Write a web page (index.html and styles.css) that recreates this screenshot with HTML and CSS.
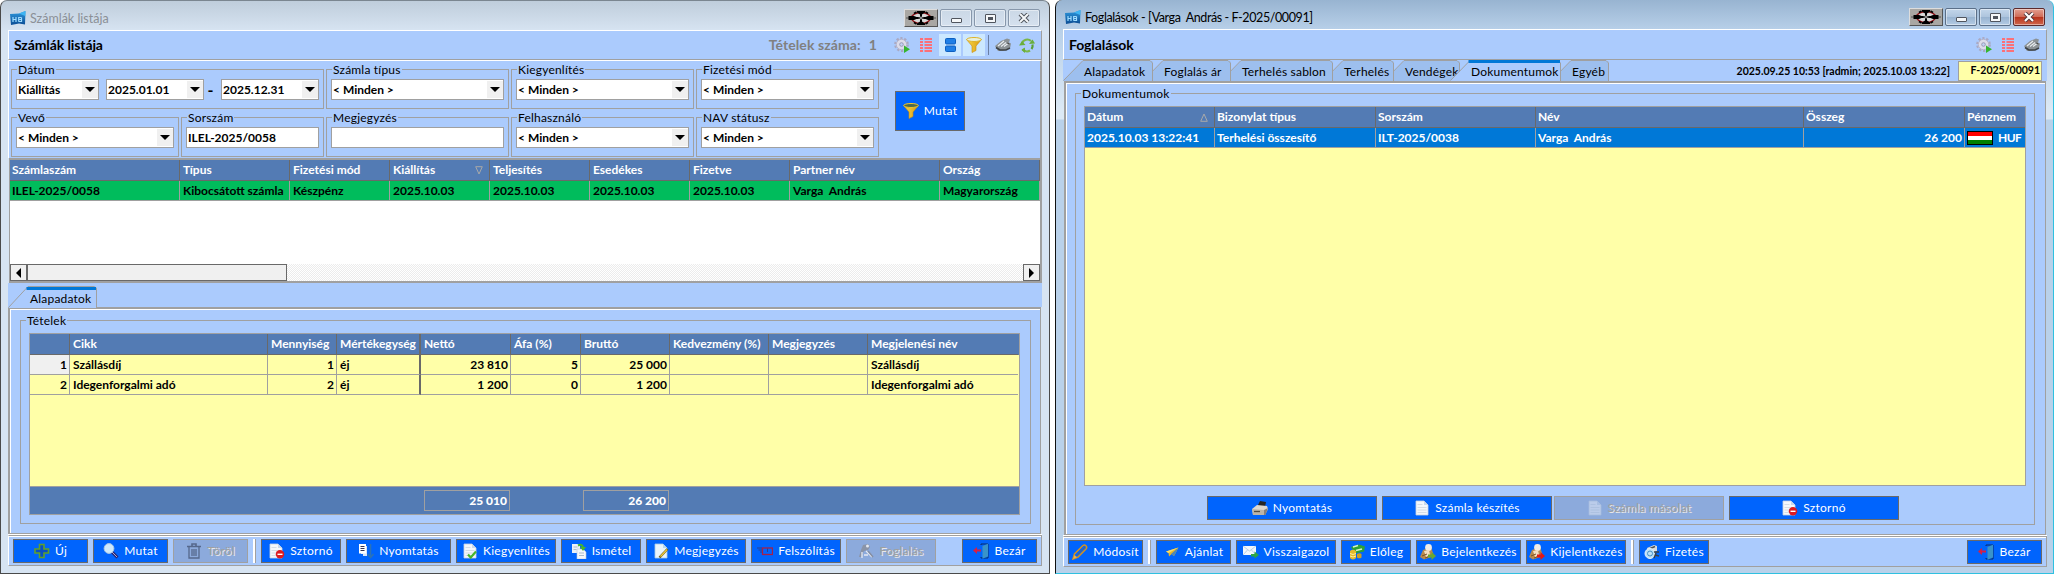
FILE: index.html
```html
<!DOCTYPE html>
<html lang="hu">
<head>
<meta charset="utf-8">
<title>Számlák listája</title>
<link rel="stylesheet" href="styles.css">
</head>
<body>
<svg class="defs" aria-hidden="true">
  <defs>
    <linearGradient id="gBlue" x1="0" y1="0" x2="0" y2="1"><stop offset="0" stop-color="#2f9be0"/><stop offset="1" stop-color="#0a4c94"/></linearGradient>
    <linearGradient id="gGold" x1="0" y1="0" x2="1" y2="0"><stop offset="0" stop-color="#f7d84a"/><stop offset="1" stop-color="#d99a10"/></linearGradient>
    <symbol id="logo" viewBox="0 0 16 15"><path d="M0 3 L9 2.5 L15.5 0 L15 13.5 L9 12.5 L1 14z" fill="url(#gBlue)"/><path d="M9 2.5 L15.5 0 L15.3 5z" fill="#3db4f2"/><path d="M3 6v5M6 6v5M3 8.5h3M11.5 6.5H8.7v2h2.8v2H8.5M8.7 8.500v2M11.500 6.500v2" stroke="#9fdcff" stroke-width="1.200" fill="none"/></symbol>
    <symbol id="target" viewBox="0 0 30 16"><ellipse cx="15" cy="8" rx="9.500" ry="5.500" fill="#d9d9d9" stroke="#8b0f14" stroke-width="1.500"/><path d="M0 8h30" stroke="#555" stroke-width="1"/><path d="M2.500 6H8l2.500 1h2v2h-2L8 10H2.500zM27.500 6H22l-2.500 1h-2v2h2l2.500 1h5.500zM11 1h8v1.500l-3 2v2h-2v-2l-3-2zM11 15h8v-1.500l-3-2v-2h-2v2l-3 2z" fill="#000"/><path d="M8 3.500 10.500 2M22 3.500 19.500 2M8 12.500l2.500 1.500M22 12.500 19.500 14" stroke="#000" stroke-width="1.500"/><path d="M15 4v8M8 8h14" stroke="#000" stroke-width="1"/><rect x="14.300" y="7.300" width="1.400" height="1.400" fill="#fff"/></symbol>
    <symbol id="gear" viewBox="0 0 16 16"><circle cx="7.500" cy="7.500" r="6.200" fill="none" stroke="#a9a9c4" stroke-width="2.400" stroke-dasharray="2.200 1.700"/><circle cx="7.500" cy="7.500" r="5.200" fill="#dcdcea" stroke="#b5b5cc"/><circle cx="7.500" cy="7.500" r="1.800" fill="#c3d3f3" stroke="#9a9ab6"/><path d="M10 8.500l6 3.700-6 3.700z" fill="#35b52e"/></symbol>
    <symbol id="list" viewBox="0 0 12 14"><path d="M0 1h3M4.500 1H12M0 4h3M4.500 4H12M0 7h3M4.500 7H12M0 10h3M4.500 10H12M0 13h3M4.500 13H12" stroke="#fb7078" stroke-width="2"/></symbol>
    <symbol id="split" viewBox="0 0 11 14"><rect x=".5" y=".5" width="10" height="5.500" rx="1" fill="#1f7fe6" stroke="#0d5fc0"/><rect x=".5" y="8" width="10" height="5.500" rx="1" fill="#1f7fe6" stroke="#0d5fc0"/></symbol>
    <symbol id="funnel" viewBox="0 0 16 16"><path d="M.5 2.500 6 9v6.500l4-2V9l5.500-6.500z" fill="url(#gGold)" stroke="#c98a0a" stroke-width=".6"/><ellipse cx="8" cy="2.500" rx="7.300" ry="2" fill="#4d6a4a" stroke="#f1c62e" stroke-width="1"/></symbol>
    <symbol id="funnelLight" viewBox="0 0 16 16"><path d="M.5 2.500 6 9v6.500l4-2V9l5.500-6.500z" fill="url(#gGold)" stroke="#c98a0a" stroke-width=".6"/><ellipse cx="8" cy="2.500" rx="7.300" ry="2" fill="#e8f1dc" stroke="#dfb32a" stroke-width="1"/></symbol>
    <symbol id="cloudPrint" viewBox="0 0 16 14"><path d="M0 8 6 3l6-2.500 3 1-1 3 2 1-1 5-7 2.500H3z" fill="#8c9296"/><path d="M1 9.500 5 12h6l4-2" stroke="#3d4246" stroke-width="1.500" fill="none"/><path d="M3 8l6-5M6 8.500l5-4M9 8.500l4-3" stroke="#e9edf0" stroke-width="1.200"/><path d="M12 5l2.500 1" stroke="#444"/></symbol>
    <symbol id="refresh" viewBox="0 0 16 16"><path d="M3 6.500A5.500 5.500 0 0 1 12 4" fill="none" stroke="#7ab648" stroke-width="2.200"/><path d="M13.500 7.500a5.500 5.500 0 0 1-1 4.500" fill="none" stroke="#5aa035" stroke-width="2.200"/><path d="M11 13.500A5.500 5.500 0 0 1 3.500 12" fill="none" stroke="#7ab648" stroke-width="2.200"/><path d="M0 8.500 3 4l3.500 4zM10 7l6-.5L13.500 2.500zM6 10.500v5.500L2.500 13z" fill="#6aae3c"/></symbol>
    <symbol id="plus" viewBox="0 0 16 16"><path d="M5.500 1.500h4.500v4.500h4.500v4H10v4.500H5.500V10H1V6h4.500z" fill="#0a4fc4" stroke="#5fa02c" stroke-width="1.600"/></symbol>
    <symbol id="lens" viewBox="0 0 16 16"><path d="M9 9l5.500 5.500" stroke="#2a2670" stroke-width="3"/><path d="M9 9l5 5" stroke="#a9a6d8" stroke-width="1"/><circle cx="6" cy="5.500" r="4.900" fill="#cfe9fb" stroke="#aac6e4"/></symbol>
    <symbol id="trash" viewBox="0 0 16 16"><path d="M1 3.500h14M6 3V1h4v2" stroke="#55688c" stroke-width="1.600" fill="none"/><path d="M3 4v11h10V4M6 6v7M8 6v7M10 6v7" stroke="#55688c" stroke-width="1.300" fill="none"/></symbol>
    <symbol id="doc" viewBox="0 0 16 16"><path d="M2 1h8l4 4v10H2z" fill="#f4f7fb" stroke="#c6d2e2" stroke-width=".8"/><path d="M10 1v4h4" fill="#c8d7ea"/><path d="M3.500 4.500h5M3.500 7.500h9M3.500 10h9M3.500 12.500h9" stroke="#cdd6e0" stroke-width=".8"/></symbol>
    <symbol id="docStop" viewBox="0 0 16 16"><use href="#doc" x="-1"/><circle cx="11" cy="11.300" r="4.200" fill="#dc1b22"/><path d="M8.500 11.300h5" stroke="#fff" stroke-width="1.400"/></symbol>
    <symbol id="docOk" viewBox="0 0 16 16"><use href="#doc"/><path d="M6 11.500l2.700 3L14 8.500" stroke="#48b52c" stroke-width="2.200" fill="none"/></symbol>
    <symbol id="pagesDown" viewBox="0 0 16 16"><path d="M3 3h6v10H5V11H3z" fill="#d7e3f7"/><rect x="1" y="1" width="7" height="9.500" fill="#fff"/><path d="M2.500 3.500h4M2.500 5.500h4M2.500 7.500h4" stroke="#335"/><path d="M12.500 1v12M9.500 11l3 3.500 3-3.500" stroke="#2b72b8" stroke-width="1.600" fill="none"/></symbol>
    <symbol id="repeat" viewBox="0 0 16 16"><path d="M1 1h6l2 2v7H1z" fill="#eaf0f8"/><path d="M6 6h6l3 3v7H6z" fill="#f4f7fb" stroke="#b9c8da" stroke-width=".6"/><path d="M2.500 4h4M2.500 6.500h3M8 10h5M8 12.500h5" stroke="#aebccb"/><path d="M7 2.500c3-1.500 5-.5 5 2.500" stroke="#48b52c" stroke-width="2" fill="none"/><path d="M9 4h6l-3 4z" fill="#48b52c"/></symbol>
    <symbol id="note" viewBox="0 0 16 16"><path d="M2 1h8l4 4v10H2z" fill="#e9f4fb" stroke="#a9cbe2" stroke-width=".8"/><path d="M10 1v4h4z" fill="#b8d7ee"/><path d="M6.500 14.500 14.500 6" stroke="#6b5a1c" stroke-width="2.400"/><path d="M7.500 13.500 14 6.500" stroke="#f0cc3c" stroke-width="1.300"/></symbol>
    <symbol id="notice" viewBox="0 0 16 16"><rect x="5.500" y="5" width="10" height="6.500" fill="none" stroke="#a52049" stroke-width="1.300"/><path d="M0 5h5M1.500 7H5M3 9h2M10.500 5.500v3.500" stroke="#2a3f8e" stroke-width="1"/></symbol>
    <symbol id="keysOff" viewBox="0 0 16 16"><path d="M5 2l5-1 2 3-2 3-4 1-3 6H1l2-7z" fill="#8a94a8"/><circle cx="9.500" cy="3" r="1.500" fill="#e5e9f2"/><path d="M8 8l6 6M4 9v6M6 12h4" stroke="#e5e9f2" stroke-width="1.300"/><path d="M10 8l5 6" stroke="#858fa4" stroke-width="1.500"/></symbol>
    <symbol id="door" viewBox="0 0 16 16"><path d="M8 2V1h7v14H8v-1" fill="none" stroke="#0b2c66"/><path d="M9.500 3 15 .8v12.700l-5.500 2.300z" fill="#3a93c9"/><path d="M0 7.500l4-3.500v2.500h4v2H4V11z" fill="#d61f45"/></symbol>
    <symbol id="pencil" viewBox="0 0 16 16"><path d="M1 15l1.500-5L11 1.500q1.500-1.200 2.900.2t.3 3L6 13z" fill="none" stroke="#d3911f" stroke-width="1.500"/><path d="M1 15l1.500-4 2.500 2.300z" fill="#e8b14e"/><path d="M5 11.500l8-8.500" stroke="#8a6a2a" stroke-width=".7"/></symbol>
    <symbol id="plane" viewBox="0 0 16 16"><path d="M2 7.500l12.500-4L10 12l-2.500-2-2.500 2.500-.5-3.500z" fill="#e9b82a"/><path d="M7 10l7.500-6.500L10 12z" fill="#4f87b5"/><path d="M2 7.500l12.500-4L4.500 9z" fill="#f8df6b"/></symbol>
    <symbol id="mail" viewBox="0 0 16 16"><rect x="0" y="2" width="13" height="9" fill="#f2f7fc"/><path d="M0 2l6.500 5L13 2M0 11l4.500-5M13 11 8.500 6" fill="none" stroke="#aac4de" stroke-width=".8"/><path d="M8 10h3.500V7.500L16 11l-4.500 3.500V12.500H8z" fill="#2fa645"/></symbol>
    <symbol id="money" viewBox="0 0 16 16"><path d="M2 3l8-2.500 6 2-1 5-9 2z" fill="#2ea136"/><path d="M4 3l5-1.500M7 6.500l6-1.500" stroke="#d5f2c8" stroke-width="1.500"/><path d="M1 7q3-2.500 6 0v7q-3 3-6 0z" fill="#e6b92c"/><path d="M1 9.500q3 2 6 0M1 12q3 2 6 0" stroke="#fff1a0" fill="none"/><path d="M8 10q2.500-1.500 4.500 0v3.500q-2 1.700-4.500 0z" fill="#cfa020"/></symbol>
    <symbol id="guest" viewBox="0 0 16 16"><path d="M3 6l8-3 3 9-10 3.500L0 13z" fill="#b98a4c"/><circle cx="8.500" cy="3.500" r="3.400" fill="#f1ece6"/><path d="M4 7l5-1 1 5-4 2z" fill="#f3dfc0"/><path d="M2 12l5-2M5 14l3-1" stroke="#7b5526"/></symbol>
    <symbol id="guestIn" viewBox="0 0 16 16"><use href="#guest"/><path d="M8 10.500h3.500V8L16 12l-4.500 4v-2.500H8z" fill="#6aa72f"/></symbol>
    <symbol id="guestOut" viewBox="0 0 16 16"><use href="#guest"/><path d="M8 10.500h3.500V8L16 12l-4.500 4v-2.500H8z" fill="#e01818"/></symbol>
    <symbol id="pay" viewBox="0 0 16 16"><path d="M3 4l7-3 3 1v5l-8 3z" fill="#d8dadd"/><path d="M5 5l6-2.500" stroke="#4c5052" stroke-width="1.500"/><circle cx="6" cy="9.500" r="5" fill="#bfe0f6" stroke="#e9f3fa"/><circle cx="6" cy="9.500" r="2.500" fill="none" stroke="#4592c8"/><path d="M10 8h5M11 11l4 1M10 14l2-5" stroke="#3a3f46" stroke-width="1.400"/></symbol>
    <symbol id="printer" viewBox="0 0 16 16"><path d="M5 7 8 1l6 1-1 5z" fill="#252525"/><path d="M0 9l5-4 10 1 1 3-3 6H1z" fill="#ddd8d0"/><path d="M0 9l12 1v5H1z" fill="#bdb5a8"/><path d="M2 11.500h6" stroke="#514b40" stroke-width="1.300"/><path d="M12 10l4-2-2.500 7H12z" fill="#87807a"/></symbol>
  </defs>
</svg>

<main class="desktop">
  <section class="window window-list">
    <header class="titlebar">
      <svg class="logo"><use href="#logo"/></svg><span class="caption">Számlák listája</span>
      <div class="controls">
        <span class="aim"><svg><use href="#target"/></svg></span>
        <span class="ctl"><i class="glyph-min"></i></span>
        <span class="ctl"><i class="glyph-max"></i></span>
        <span class="ctl"><svg class="glyph-x" viewBox="0 0 12 10"><path d="M2 1l8 8M10 1l-8 8" stroke="#50555e" stroke-width="4"/><path d="M2 1l8 8M10 1l-8 8" stroke="#f5f7f9" stroke-width="2"/></svg></span>
      </div>
    </header>
    <div class="heading">
      <h1>Számlák listája</h1>
      <div class="tools">
        <span class="count">Tételek száma:</span><span class="count count-n">1</span>
        <svg class="i16 igear"><use href="#gear"/></svg>
        <svg class="ilist"><use href="#list"/></svg>
        <span class="toggle"><svg class="isplit"><use href="#split"/></svg></span>
        <span class="toggle"><svg class="i16"><use href="#funnelLight"/></svg></span>
        <i class="vline"></i>
        <svg class="icloud"><use href="#cloudPrint"/></svg>
        <svg class="i16"><use href="#refresh"/></svg>
      </div>
    </div>
    <div class="filters">
      <div class="filter-rows">
        <div class="filter-row">
          <div class="group w313"><span class="legend">Dátum</span>
            <div class="combo w83">Kiállítás<i></i></div><div class="combo w98 after-type">2025.01.01<i></i></div><span class="dash">-</span><div class="combo w98">2025.12.31<i></i></div></div>
          <div class="group w183"><span class="legend">Számla típus</span><div class="combo w173">&lt; Minden &gt;<i></i></div></div>
          <div class="group w183"><span class="legend">Kiegyenlítés</span><div class="combo w173">&lt; Minden &gt;<i></i></div></div>
          <div class="group w183"><span class="legend">Fizetési mód</span><div class="combo w173">&lt; Minden &gt;<i></i></div></div>
        </div>
        <div class="filter-row">
          <div class="group w168"><span class="legend">Vevő</span><div class="combo w158">&lt; Minden &gt;<i></i></div></div>
          <div class="group w143"><span class="legend">Sorszám</span><div class="combo w133">ILEL-2025/0058</div></div>
          <div class="group w183"><span class="legend">Megjegyzés</span><div class="combo w173"></div></div>
          <div class="group w183"><span class="legend">Felhasználó</span><div class="combo w173">&lt; Minden &gt;<i></i></div></div>
          <div class="group w183"><span class="legend">NAV státusz</span><div class="combo w173">&lt; Minden &gt;<i></i></div></div>
        </div>
      </div>
      <button class="btn btn-show"><svg><use href="#funnel"/></svg>Mutat</button>
    </div>
    <div class="grid invoices">
      <div class="row head"><span>Számlaszám</span><span>Típus</span><span>Fizetési mód</span><span class="sorted">Kiállítás<svg viewBox="0 0 8 9"><path d="M.7.700h6.600L4 8z" fill="none" stroke="#a9a9a9"/></svg></span><span>Teljesítés</span><span>Esedékes</span><span>Fizetve</span><span>Partner név</span><span>Ország</span></div>
      <div class="row green"><span>ILEL-2025/0058</span><span>Kibocsátott számla</span><span>Készpénz</span><span>2025.10.03</span><span>2025.10.03</span><span>2025.10.03</span><span>2025.10.03</span><span>Varga&nbsp; András</span><span>Magyarország</span></div>
      <div class="blank"></div>
      <div class="scroll"><i class="sb left"></i><i class="thumb"></i><i class="sb right"></i></div>
    </div>
    <div class="tabs tabs-list">
      <div class="tab active t90"><svg viewBox="0 0 90 22"><path class="face" d="M0 22 20 1H88.500V22z"/><path class="edge" d="M.500 21.500 20 .5 H86 L88.500 2V22"/><path class="cap" d="M18.500 2.500H88"/></svg><span>Alapadatok</span></div>
    </div>
    <div class="page page-list">
      <div class="box"><span class="legend">Tételek</span>
        <div class="grid items">
          <div class="row head"><span></span><span>Cikk</span><span>Mennyiség</span><span>Mértékegység</span><span>Nettó</span><span>Áfa (%)</span><span>Bruttó</span><span>Kedvezmény (%)</span><span>Megjegyzés</span><span>Megjelenési név</span></div>
          <div class="row"><span class="num current">1</span><span>Szállásdíj</span><span class="num">1</span><span>éj</span><span class="num">23 810</span><span class="num">5</span><span class="num">25 000</span><span></span><span></span><span>Szállásdíj</span></div>
          <div class="row"><span class="num">2</span><span>Idegenforgalmi adó</span><span class="num">2</span><span>éj</span><span class="num">1 200</span><span class="num">0</span><span class="num">1 200</span><span></span><span></span><span>Idegenforgalmi adó</span></div>
          <div class="fill"></div>
          <div class="totals"><b class="sum sum-net">25 010</b><b class="sum sum-gross">26 200</b></div>
        </div>
      </div>
    </div>
    <footer class="bar">
      <button class="btn b75"><svg><use href="#plus"/></svg>Új</button>
      <button class="btn b75"><svg><use href="#lens"/></svg>Mutat</button>
      <button class="btn b75 off"><svg><use href="#trash"/></svg>Töröl</button>
      <i class="sep"></i>
      <button class="btn b80"><svg><use href="#docStop"/></svg>Sztornó</button>
      <button class="btn b105"><svg><use href="#pagesDown"/></svg>Nyomtatás</button>
      <button class="btn b100"><svg><use href="#docOk"/></svg>Kiegyenlítés</button>
      <button class="btn b80"><svg><use href="#repeat"/></svg>Ismétel</button>
      <button class="btn b100"><svg><use href="#note"/></svg>Megjegyzés</button>
      <button class="btn b90"><svg><use href="#notice"/></svg>Felszólítás</button>
      <button class="btn b90 off"><svg><use href="#keysOff"/></svg>Foglalás</button>
      <button class="btn b75 last"><svg><use href="#door"/></svg>Bezár</button>
    </footer>
  </section>

  <section class="window window-booking">
    <header class="titlebar">
      <svg class="logo"><use href="#logo"/></svg><span class="caption">Foglalások - [Varga&nbsp; András - F-2025/00091]</span>
      <div class="controls">
        <span class="aim"><svg><use href="#target"/></svg></span>
        <span class="ctl"><i class="glyph-min"></i></span>
        <span class="ctl"><i class="glyph-max"></i></span>
        <span class="ctl close"><svg class="glyph-x" viewBox="0 0 12 10"><path d="M2 1l8 8M10 1l-8 8" stroke="#50353a" stroke-width="4"/><path d="M2 1l8 8M10 1l-8 8" stroke="#fff" stroke-width="2.200"/></svg></span>
      </div>
    </header>
    <div class="heading">
      <h1>Foglalások</h1>
      <div class="tools">
        <svg class="i16 igear"><use href="#gear"/></svg>
        <svg class="ilist"><use href="#list"/></svg>
        <svg class="icloud"><use href="#cloudPrint"/></svg>
      </div>
    </div>
    <div class="tabs tabs-booking">
      <div class="tab t90"><svg viewBox="0 0 90 21"><path class="face" d="M0 21 20 1H89.500V21z"/><path class="edge" d="M.500 20.500 20 .5H87L89.500 3V21"/></svg><span>Alapadatok</span></div>
      <div class="tab t88"><svg viewBox="0 0 88 21"><path class="face" d="M0 21 20 1H87.500V21z"/><path class="edge" d="M.500 20.500 20 .5H85L87.500 3V21"/></svg><span>Foglalás ár</span></div>
      <div class="tab t112"><svg viewBox="0 0 112 21"><path class="face" d="M0 21 20 1H111.500V21z"/><path class="edge" d="M.500 20.500 20 .5H109L111.500 3V21"/></svg><span>Terhelés sablon</span></div>
      <div class="tab t71"><svg viewBox="0 0 71 21"><path class="face" d="M0 21 20 1H70.500V21z"/><path class="edge" d="M.500 20.500 20 .5H68L70.500 3V21"/></svg><span>Terhelés</span></div>
      <div class="tab t76"><svg viewBox="0 0 76 21"><path class="face" d="M0 21 20 1H75.500V21z"/><path class="edge" d="M.500 20.500 20 .5H73L75.500 3V21"/></svg><span>Vendégek</span></div>
      <div class="tab active t111"><svg viewBox="0 0 111 21"><path class="face" d="M0 21 20 1H110.500V21z"/><path class="edge" d="M.500 20.500 20 .5H108L110.500 3V21"/><path class="cap" d="M18.500 1.500H110"/></svg><span>Dokumentumok</span></div>
      <div class="tab t58"><svg viewBox="0 0 58 21"><path class="face" d="M0 21 20 1H57.500V21z"/><path class="edge" d="M.500 20.500 20 .5H55L57.500 3V21"/></svg><span>Egyéb</span></div>
      <div class="stamp">2025.09.25 10:53 [radmin; 2025.10.03 13:22]</div>
      <div class="code">F-2025/00091</div>
    </div>
    <div class="page page-booking">
      <div class="box"><span class="legend">Dokumentumok</span>
        <div class="grid docs">
          <div class="row head"><span class="sorted">Dátum<svg viewBox="0 0 8 9"><path d="M.7 8.300h6.600L4 1z" fill="none" stroke="#a9a9a9"/></svg></span><span>Bizonylat típus</span><span>Sorszám</span><span>Név</span><span>Összeg</span><span>Pénznem</span></div>
          <div class="row picked"><span>2025.10.03 13:22:41</span><span>Terhelési összesítő</span><span>ILT-2025/0038</span><span>Varga&nbsp; András</span><span class="num">26 200</span><span class="cur"><i class="flag"></i>HUF</span></div>
        </div>
        <div class="doc-actions">
          <button class="btn b170"><svg><use href="#printer"/></svg>Nyomtatás</button>
          <button class="btn b170"><svg><use href="#doc"/></svg>Számla készítés</button>
          <button class="btn b170 off tight"><svg class="faded"><use href="#doc"/></svg>Számla másolat</button>
          <button class="btn b170"><svg><use href="#docStop"/></svg>Sztornó</button>
        </div>
      </div>
    </div>
    <footer class="bar">
      <button class="btn b75"><svg><use href="#pencil"/></svg>Módosít</button>
      <i class="sep sep-even"></i>
      <button class="btn b75"><svg><use href="#plane"/></svg>Ajánlat</button>
      <button class="btn b100"><svg><use href="#mail"/></svg>Visszaigazol</button>
      <button class="btn b70"><svg><use href="#money"/></svg>Előleg</button>
      <button class="btn b105"><svg><use href="#guestIn"/></svg>Bejelentkezés</button>
      <button class="btn b100"><svg><use href="#guestOut"/></svg>Kijelentkezés</button>
      <i class="sep sep-even"></i>
      <button class="btn b70"><svg><use href="#pay"/></svg>Fizetés</button>
      <button class="btn b75 last"><svg><use href="#door"/></svg>Bezár</button>
    </footer>
  </section>
</main>
</body>
</html>
```

FILE: styles.css
```css
* { box-sizing: border-box; }
body { margin: 0; background: #fff; font: 12px/16px Lato, "Open Sans", sans-serif; color: #000; overflow: hidden; }
.defs { position: absolute; width: 0; height: 0; }
svg { flex: none; display: block; }
.desktop { display: flex; gap: 5px; width: 2054px; height: 574px; }

/* window frames */
.window { display: flex; flex-direction: column; height: 574px; }
.window-list { width: 1050px; padding: 0 7px; border: 1px solid #4a4a4a; border-top-color: #7b8690; border-radius: 7px 7px 0 0; background: linear-gradient(#bfcddb, #d7e4f2 30px); }
.window-booking { width: 999px; padding: 0 6px 0 7px; border: 1px solid #111; border-top: 0; border-right-color: #2fc0e0; border-bottom-color: #2fc0e0; border-radius: 7px 7px 0 0; background: linear-gradient(#98b4d1, #b8d0e9 30px, #dce9f5 110px, #dce9f5 119px, #b9d1ea 120px); }
.titlebar { display: flex; align-items: center; flex: none; height: 29px; }
.window-list .titlebar { padding: 6px 2px 0 2px; }
.window-booking .titlebar { padding: 6px 2px 0 2px; }
.logo { width: 16px; height: 15px; }
.caption { margin-left: 4px; font-size: 12.5px; color: #000; white-space: pre; }
.window-list .caption { color: #8b9096; }
.window-booking .caption { letter-spacing: -.4px; }
.controls { display: flex; gap: 2px; margin: 2px 0 0 auto; align-self: flex-start; }
.aim { width: 34px; height: 18px; background: #a9a7a3; border: 1px solid #ddd; border-right-color: #555; border-bottom-color: #555; padding: 0 1px; }
.aim svg { width: 30px; height: 16px; }
.ctl { display: flex; align-items: center; justify-content: center; width: 32px; height: 18px; border: 1px solid #8797ab; border-radius: 2px; background: linear-gradient(#cbd8e6, #d5e1ee); box-shadow: inset 0 0 0 1px rgba(255,255,255,.45); }
.window-booking .ctl { background: linear-gradient(#c3d6ea, #adc4dd 50%, #98b3d0 51%, #b3cbe4); border-color: #5b6f88; }
.window-booking .ctl.close { background: linear-gradient(#e3a091, #cf6a56 50%, #b8331c 51%, #d0674c); border-color: #5c2a2c; }
.glyph-min { width: 11px; height: 5px; margin-top: 4px; background: #f5f7f9; border: 1px solid #50555e; border-radius: 1px; }
.glyph-max { width: 11px; height: 9px; background: #50555e; border: 1px solid #50555e; border-radius: 1px; box-shadow: inset 0 0 0 2px #f5f7f9; }
.glyph-x { width: 12px; height: 10px; }

/* heading strip */
.heading { display: flex; align-items: center; flex: none; height: 31px; background: #abcbfd; border: 1px solid #fff; border-right-color: #a0a0a0; border-bottom-color: #a0a0a0; padding-left: 5px; }
.window-list .heading { height: 30px; }
h1 { margin: 0; font-size: 14px; line-height: 18px; letter-spacing: -.1px; }
.tools { display: flex; align-items: center; margin-left: auto; padding-right: 6px; gap: 8px; }
.count { font-weight: bold; font-size: 14px; letter-spacing: .1px; color: #808080; }
.count-n { margin-right: 9px; }
.i16 { width: 16px; height: 16px; }
.igear { margin-right: 2px; }
.ilist { width: 12px; height: 14px; }
.isplit { width: 11px; height: 14px; }
.icloud { width: 16px; height: 14px; }
.ilist + .icloud { margin-left: 2px; }
.toggle { display: flex; align-items: center; justify-content: center; width: 22px; height: 22px; margin-left: -1px; background: #cce8ff; }
.toggle + .toggle { margin-left: -6px; }
.vline { width: 1px; height: 20px; margin: 0 -2px 0 -5px; background: #6a7fa3; }

/* filters */
.filters { display: flex; flex: none; height: 98px; background: #abcbfd; border-top: 1px solid #fff; border-left: 1px solid #fff; border-right: 2px solid #a0a0a0; padding: 8px 0 0 2px; }
.filter-rows { display: flex; flex-direction: column; gap: 8px; }
.filter-row { display: flex; gap: 2px; }
.group, .box { position: relative; border: 1px solid #a0a0a0; }
.group { display: flex; height: 40px; padding: 9px 0 0 4px; }
.legend { position: absolute; top: -8px; left: 5px; padding: 0 1px; background: #abcbfd; letter-spacing: .2px; white-space: nowrap; }
.combo { display: flex; height: 21px; border: 1px solid #a0a0a0; background: #fff; padding-left: 1px; font-weight: bold; line-height: 19px; white-space: nowrap; }
.combo i { position: relative; width: 16px; margin: 1px 0 1px auto; background: #f0f0f0; }
.combo i::after { content: ""; position: absolute; left: 3px; top: 6px; border: 5px solid transparent; border-top-color: #000; border-bottom: 0; }
.after-type { margin-left: 7px; }
.dash { width: 17px; text-align: center; font-weight: bold; font-size: 16px; line-height: 21px; padding-right: 4px; }
.w313 { width: 313px; } .w183 { width: 183px; } .w168 { width: 168px; } .w143 { width: 143px; }
.w83 { width: 83px; } .w98 { width: 98px; } .w173 { width: 173px; } .w158 { width: 158px; } .w133 { width: 133px; }

/* buttons */
.btn { display: flex; align-items: center; justify-content: center; gap: 5px; flex: none; height: 24px; padding: 0; border: 1px solid #696969; border-radius: 0; background: #0064fd; color: #fff; font: 12px/16px Lato, "Open Sans", sans-serif; letter-spacing: .25px; white-space: nowrap; }
.btn svg { width: 16px; height: 16px; }
.btn.off { background: #8caadc; border-color: #a0a0a0; color: #a0a0a0; text-shadow: 1px 1px 0 #e8e8e8; }
.faded { opacity: .45; }
.btn-show { width: 70px; height: 40px; margin: 22px 0 0 16px; }
.b70 { width: 70px; } .b75 { width: 75px; } .b80 { width: 80px; } .b90 { width: 90px; } .b100 { width: 100px; } .b105 { width: 105px; } .b170 { width: 170px; }

/* data grids */
.grid { font-weight: bold; }
.row { display: grid; height: 20px; }
.row span { border-right: 1px solid #a0a0a0; border-bottom: 1px solid #a0a0a0; padding: 0 2px; line-height: 19px; white-space: nowrap; overflow: hidden; }
.row.head { height: 21px; background: #537bb4; color: #fff; }
.row.head span { border-color: #696969; line-height: 20px; }
.row span.num { text-align: right; }
.row .sorted { display: flex; align-items: center; justify-content: space-between; padding-right: 6px; }
.sorted svg { width: 8px; height: 9px; }
.window-list .row span + span { padding-left: 3px; }
.invoices { display: flex; flex-direction: column; flex: none; height: 125px; border: 2px solid #a0a0a0; border-left-width: 1px; margin-left: 1px; background: #fff; }
.invoices .row { grid-template-columns: 170px 110px 100px 100px 100px 100px 100px 150px 100px; }
.green { background: #00bc5c; }
.blank { flex: 1; }
.scroll { display: flex; height: 17px; background: repeating-conic-gradient(#ececec 0 25%, #fff 0 50%) 0 0 / 2px 2px; }
.sb { position: relative; width: 17px; border: 1px solid #696969; background: #f0f0f0; }
.sb::after { content: ""; position: absolute; top: 3px; left: 5px; border: 5px solid transparent; }
.sb.left::after { border-right-color: #000; border-left: 0; }
.sb.right::after { border-left-color: #000; border-right: 0; }
.sb.right { margin-left: auto; }
.thumb { width: 260px; border: 1px solid #696969; background: #f0f0f0; }

/* tabs */
.tabs { display: flex; flex: none; background: #abcbfd; }
.tabs-list { height: 24px; padding-top: 3px; }
.tabs-booking { height: 21px; }
.tab { position: relative; flex: none; height: 21px; margin-right: -10px; padding: 4px 0 0 21px; }
.tab svg { position: absolute; left: 0; top: 0; width: 100%; height: 21px; }
.tabs-list .tab { height: 22px; padding: 5px 0 0 22px; }
.tabs-list .tab svg { height: 22px; }
.tab span { position: relative; letter-spacing: .2px; white-space: nowrap; }
.face { fill: #9dbfee; }
.active .face { fill: #abcbfd; }
.edge { fill: none; stroke: #a0a0a0; }
.cap { stroke: #0078d7; stroke-width: 3; }
.t58 { width: 58px; } .t71 { width: 71px; } .t76 { width: 76px; } .t88 { width: 88px; } .t90 { width: 90px; } .t111 { width: 111px; } .t112 { width: 112px; }
.tab:nth-child(1) { z-index: 6; } .tab:nth-child(2) { z-index: 5; } .tab:nth-child(3) { z-index: 4; } .tab:nth-child(4) { z-index: 3; } .tab:nth-child(5) { z-index: 2; }
.tab.active { z-index: 7; }
.stamp { margin-left: auto; font-size: 10.5px; font-weight: bold; line-height: 22px; white-space: nowrap; }
.code { width: 84px; height: 20px; margin: 1px 5px 0 8px; border: 1px solid #a0a0a0; background: #ffffa8; font-size: 10.5px; font-weight: bold; line-height: 17px; text-align: right; padding-right: 1px; }

/* tab pages */
.page { flex: none; background: #abcbfd; border: 2px solid #a0a0a0; border-width: 2px 1px 1px 2px; box-shadow: inset 1px 1px 0 #fff; }
.page-list { height: 227px; margin-right: 1px; padding: 11px 9px 0 10px; }
.page-list .box { height: 204px; padding: 12px 10px 0 8px; }
.box > .legend { left: 5px; }
.items { height: 182px; display: flex; flex-direction: column; border: 1px solid #a0a0a0; background: #ffffa8; }
.items .row { grid-template-columns: 40px 198px 69px 84px 90px 70px 89px 99px 99px 150px; }
.items .row span:nth-child(4) { border-right: 2px solid #696969; }
.items .row span:last-child { border-right: 0; }
.current { background: #f0f0f0; }
.fill { flex: 1; }
.totals { display: flex; height: 28px; border-top: 1px solid #a0a0a0; background: #537bb4; color: #fff; padding-top: 3px; }
.sum { height: 21px; border: 1px solid #a0a0a0; text-align: right; padding-right: 2px; line-height: 20px; }
.sum-net { width: 86px; margin-left: 394px; }
.sum-gross { width: 86px; margin-left: 73px; }

.page-booking { height: 454px; margin: 0 1px; padding: 10px 10px 0 9px; }
.page-booking .box { height: 432px; padding: 12px 8px 0 8px; }
.docs { height: 380px; border: 1px solid #a0a0a0; background: #ffffa8; }
.docs .row { grid-template-columns: 130px 161px 160px 268px 161px 60px; }
.docs .row span:last-child { border-right: 0; }
.picked { background: #0078d7; color: #fff; }
.row .cur { display: flex; align-items: center; gap: 5px; letter-spacing: -.6px; }
.flag { width: 26px; height: 14px; border: 1px solid #000; background: linear-gradient(#ff0000 33%, #fff 33% 66%, #008000 66%); }
.doc-actions { display: flex; gap: 5px; margin: 10px 0 0 123px; }
.tight { margin-left: -3px; }

/* bottom bars */
.bar { display: flex; gap: 5px; flex: none; height: 31px; margin-top: 1px; padding: 3px 4px 0; background: #abcbfd; border: 1px solid #a0a0a0; border-left-color: #fff; box-shadow: inset 0 1px 0 #fff, 0 -1px 0 #fff; }
.sep { width: 3px; height: 24px; border-left: 2px solid #fff; border-right: 1px solid #a0a0a0; }
.last { margin-left: auto; }
```
